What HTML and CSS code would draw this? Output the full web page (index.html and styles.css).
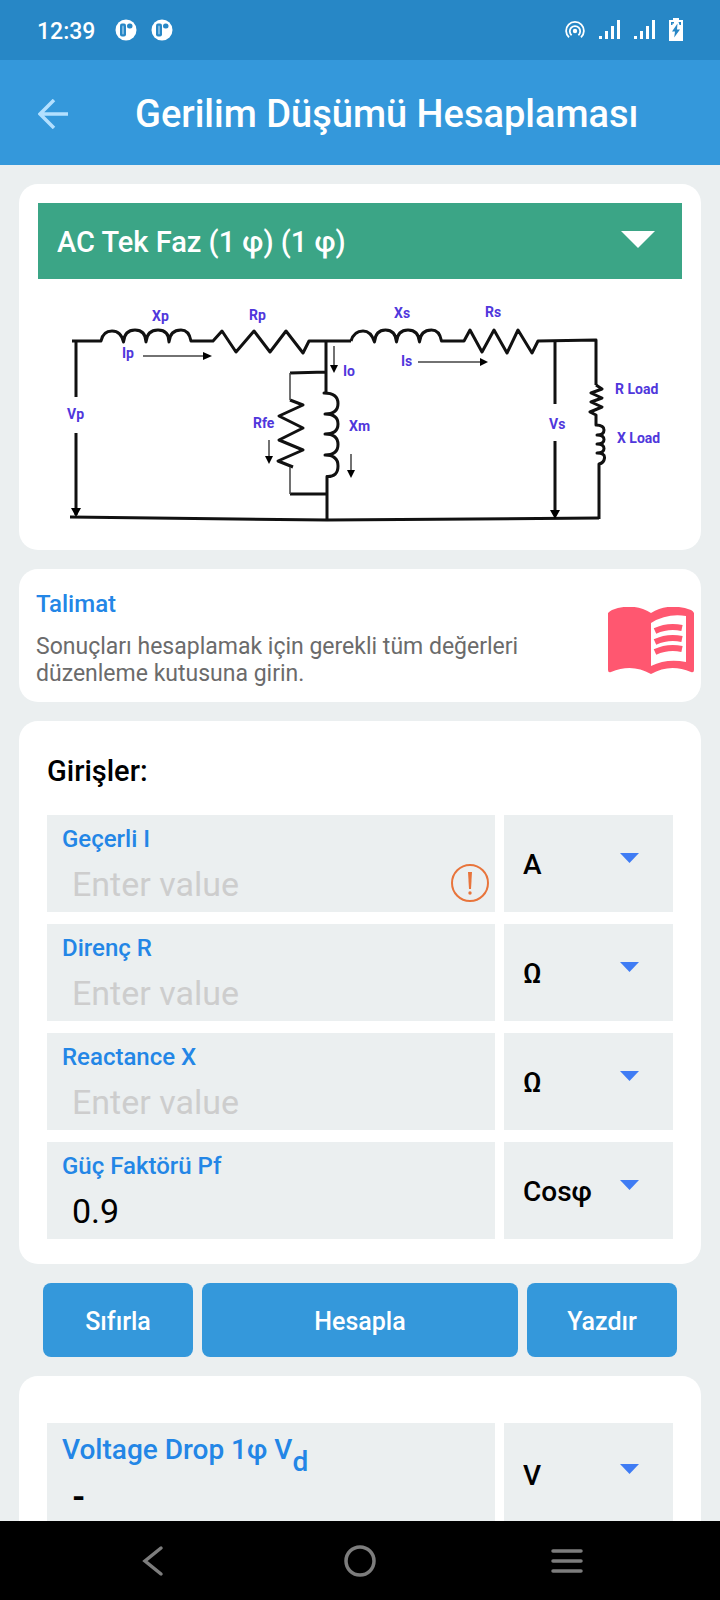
FILE: index.html
```html
<!DOCTYPE html>
<html lang="tr">
<head>
  <meta charset="UTF-8">
  <meta name="viewport" content="width=device-width, initial-scale=1.0">
  <title>Gerilim Düşümü Hesaplaması</title>
  <link rel="stylesheet" href="styles.css">
</head>
<body>
  <!-- Status bar -->
  <div class="status-bar">
    <div class="status-left">
      <span class="clock">12:39</span>
      <svg width="22" height="22" viewBox="0 0 22 22">
        <circle cx="11" cy="11" r="10.5" fill="#fff"/>
        <rect x="5" y="4.5" width="6" height="13" rx="2" fill="#2787c6"/>
        <rect x="7" y="6.5" width="2" height="9" rx="1" fill="#7db8e0"/>
        <rect x="12" y="4.5" width="5.5" height="5" rx="2.5" fill="#2787c6"/>
      </svg>
      <svg width="22" height="22" viewBox="0 0 22 22">
        <circle cx="11" cy="11" r="10.5" fill="#fff"/>
        <rect x="5" y="4.5" width="6" height="13" rx="2" fill="#2787c6"/>
        <rect x="7" y="6.5" width="2" height="9" rx="1" fill="#7db8e0"/>
        <rect x="12" y="4.5" width="5.5" height="5" rx="2.5" fill="#2787c6"/>
      </svg>
    </div>
    <div class="status-right">
      <svg width="20" height="24" viewBox="0 0 20 24" fill="none" stroke="#fff" stroke-width="1.8">
        <circle cx="10" cy="13" r="2.2" fill="#fff" stroke="none"/>
        <path d="M6.6 17.2A5.2 5.2 0 1 1 13.4 17.2"/>
        <path d="M4 19.4A8.9 8.9 0 1 1 16 19.4"/>
      </svg>
      <svg width="21" height="24" viewBox="0 0 21 24" fill="#fff">
        <path d="M0 18h3v3H0zM6 13h3v8H6zM12 8h3v13h-3zM18 2h3v19h-3z"/>
      </svg>
      <svg width="21" height="24" viewBox="0 0 21 24" fill="#fff">
        <path d="M0 18h3v3H0zM6 13h3v8H6zM12 8h3v13h-3zM18 2h3v19h-3z"/>
      </svg>
      <svg width="14" height="24" viewBox="0 0 14 24">
        <path d="M4 0h6v2h4v21H0V2h4z" fill="#fff"/>
        <path d="M2 4h3v1.500H3.500V7H2zM9.500 4H12v3h-1.500z" fill="#2787c6"/>
        <path d="M8.500 5.500 3 13.500h3l-.8 6L11 11.500H8z" fill="#2787c6"/>
      </svg>
    </div>
  </div>

  <!-- App bar -->
  <header class="app-bar">
    <button class="back" type="button" aria-label="Geri">
      <svg width="30" height="30" viewBox="0 0 30 30" fill="none" stroke="#b3e0ff" stroke-width="3.5">
        <path d="M30 15H2M16 1 2 15l14 14"/>
      </svg>
    </button>
    <h1>Gerilim Düşümü Hesaplaması</h1>
  </header>

  <main class="content">
    <!-- Circuit type -->
    <section class="card circuit-card">
      <div class="type-select">
        <select aria-label="Devre tipi">
          <option>AC Tek Faz (1 φ) (1 φ)</option>
          <option>AC Üç Faz (3 φ)</option>
          <option>DC</option>
        </select>
      </div>
      <svg class="circuit" viewBox="38 279 644 252">
        <g class="wire">
          <!-- primary side -->
          <path d="M72 341H101q2-10 11-10t11.500 11q1-12 11.500-12t11 12q1-12 12-12t11 12q1-12 12-12 8 0 10 11H213L222 331 236 352 254 331 270 352 286 331 303 353 309 341H351"/>
          <path d="M76 341V397M76 433V515"/>
          <!-- secondary side -->
          <path d="M351 341q3-10 12-10 8 0 11.500 11q1-12 11-12t11 12q1-12 11.500-12t11.500 12q1-12 12-12 8 0 10 11H464L470 330 482 352 494 330 507 353 518 330 532 353 538 341 596 340V385"/>
          <path d="M555 341V404M555 441V515"/>
          <!-- load -->
          <path d="M596 385 602 389 591 393 602 398 591 402 602 407 590 412 596 415V425q8 0 8 5t-7 5q7 0 7 4.500t-7 4.500q7 0 7 4.500t-7 4.500q8 0 7.500 5t-5.500 6V519"/>
          <!-- magnetising branch -->
          <path d="M326 341V393H324q14 0 14 10.500t-13 10.500q13 0 13 10t-13 10q13 0 13 10.500t-13 10.500q13 0 13 11t-11 10.500V520M290 373 326 372M290 494H326"/>
          <path d="M290 400 303 405 279 416 303 428 279 440 303 450 278 461 293 467"/>
          <path d="M70 517 327 520 599 518"/>
        </g>
        <g class="thin">
          <path d="M290 373V400M290 467V494M143 356H205M418 362H482M269 440V457M351 454V471M334 346V366"/>
        </g>
        <path d="M212 356l-9-4v8zM488 362l-8-4v8zM269 464l-4-8h8zM351 478l-4-8h8zM334 373l-4-8h8zM76 517l-5-9h10zM555 519l-5-9h10z"/>
        <g class="circuit-label">
          <text x="152" y="321">Xp</text>
          <text x="249" y="320">Rp</text>
          <text x="122" y="358">Ip</text>
          <text x="394" y="318">Xs</text>
          <text x="485" y="317">Rs</text>
          <text x="401" y="366">Is</text>
          <text x="343" y="376">Io</text>
          <text x="67" y="419">Vp</text>
          <text x="253" y="428">Rfe</text>
          <text x="349" y="431">Xm</text>
          <text x="549" y="429">Vs</text>
          <text x="615" y="394">R Load</text>
          <text x="617" y="443">X Load</text>
        </g>
      </svg>
    </section>

    <!-- Instructions -->
    <section class="card info-card">
      <div class="info-text">
        <h2>Talimat</h2>
        <p>Sonuçları hesaplamak için gerekli tüm değerleri düzenleme kutusuna girin.</p>
      </div>
      <svg class="book" width="87" height="68" viewBox="0 0 87 68">
        <path d="M0 6Q2 4 4 3 25-5 43 6 61-5 83 3 85 4 86 6V63Q86 66 83 65 62 56 43 67 24 56 3 65 0 66 0 63z" fill="#ff5770"/>
        <path d="M43 16Q59 6 78 9V55Q59 51 43 59z" fill="#fff"/>
        <g fill="none" stroke="#ff5770" stroke-width="6">
          <path d="M47 24Q60 18 74 21M47 35Q60 29 74 32M47 45Q60 39 74 42"/>
        </g>
      </svg>
    </section>

    <!-- Inputs -->
    <section class="card form-card">
      <h2>Girişler:</h2>
      <div class="row">
        <div class="field">
          <label for="current">Geçerli I</label>
          <input id="current" type="text" placeholder="Enter value">
          <svg class="warning" width="38" height="38" viewBox="0 0 38 38">
            <circle cx="19" cy="19" r="18" fill="none" stroke="#e8743b" stroke-width="2"/>
            <path d="M17 8h4l-1 17h-2z" fill="#e8743b"/>
            <circle cx="19" cy="29" r="1.700" fill="#e8743b"/>
          </svg>
        </div>
        <div class="unit">
          <select aria-label="Geçerli I birimi"><option>A</option><option>mA</option></select>
        </div>
      </div>
      <div class="row">
        <div class="field">
          <label for="resistance">Direnç R</label>
          <input id="resistance" type="text" placeholder="Enter value">
        </div>
        <div class="unit">
          <select aria-label="Direnç R birimi"><option>Ω</option><option>kΩ</option></select>
        </div>
      </div>
      <div class="row">
        <div class="field">
          <label for="reactance">Reactance X</label>
          <input id="reactance" type="text" placeholder="Enter value">
        </div>
        <div class="unit">
          <select aria-label="Reactance X birimi"><option>Ω</option><option>kΩ</option></select>
        </div>
      </div>
      <div class="row">
        <div class="field">
          <label for="pf">Güç Faktörü Pf</label>
          <input id="pf" type="text" value="0.9">
        </div>
        <div class="unit">
          <select aria-label="Güç Faktörü birimi"><option>Cosφ</option><option>Sinφ</option></select>
        </div>
      </div>
    </section>

    <!-- Actions -->
    <div class="actions">
      <button type="button">Sıfırla</button>
      <button type="button">Hesapla</button>
      <button type="button">Yazdır</button>
    </div>

    <!-- Results -->
    <section class="card result-card">
      <div class="row">
        <div class="field result">
          <div class="result-name">Voltage Drop 1φ V<sub>d</sub></div>
          <output>-</output>
        </div>
        <div class="unit">
          <select aria-label="Voltage Drop birimi"><option>V</option><option>mV</option></select>
        </div>
      </div>
    </section>
  </main>

  <!-- System navigation -->
  <nav class="nav-bar">
    <button type="button" aria-label="Geri">
      <svg width="32" height="32" viewBox="0 0 32 32"><path d="M24 3 8 16 24 29"/></svg>
    </button>
    <button type="button" aria-label="Ana ekran">
      <svg width="32" height="32" viewBox="0 0 32 32"><circle cx="16" cy="16" r="14"/></svg>
    </button>
    <button type="button" aria-label="Son uygulamalar">
      <svg width="32" height="32" viewBox="0 0 32 32"><path d="M2 6H30M2 16H30M2 26H30"/></svg>
    </button>
  </nav>
</body>
</html>
```
FILE: styles.css
```css
* {
  box-sizing: border-box;
}
body {
  margin: 0;
  height: 100vh;
  display: flex;
  flex-direction: column;
  font-family: Roboto, sans-serif;
  background-color: #ebeff0;
  color: #000;
}
svg {
  display: block;
  flex-shrink: 0;
}
h1, h2, p {
  margin: 0;
  font-weight: 500;
}
button, input, select {
  font-family: inherit;
  border: none;
  border-radius: 0;
}

/* Status bar */
.status-bar {
  display: flex;
  justify-content: space-between;
  align-items: center;
  height: 60px;
  padding: 0 37px;
  background-color: #2787c6;
  color: #fff;
  flex-shrink: 0;
}
.status-left,
.status-right {
  display: flex;
  align-items: center;
  gap: 14px;
}
.clock {
  padding-top: 2px;
  font-size: 23px;
  font-weight: 500;
  margin-right: 6px;
}

/* App bar */
.app-bar {
  display: flex;
  align-items: center;
  height: 105px;
  padding: 2px 38px 0;
  background-color: #3498db;
  color: #fff;
  flex-shrink: 0;
}
.back {
  padding: 0;
  background: none;
}
.app-bar h1 {
  margin-left: 67px;
  font-size: 38px;
}

/* Content */
.content {
  flex: 1;
  min-height: 0;
  overflow: hidden;
  display: flex;
  flex-direction: column;
  gap: 19px;
  padding: 19px 19px 0;
}
.card {
  flex-shrink: 0;
  background-color: #fff;
  border-radius: 19px;
}

/* Circuit type */
.circuit-card {
  padding: 19px;
}
.type-select,
.unit {
  position: relative;
}
.type-select select {
  display: block;
  width: 100%;
  height: 76px;
  padding: 2px 19px 0;
  background-color: #3ba586;
  color: #fff;
  font-size: 29px;
  font-weight: 500;
  appearance: none;
}
.type-select::after,
.unit::after {
  content: '';
  position: absolute;
  pointer-events: none;
  clip-path: polygon(0 0, 100% 0, 50% 100%);
}
.type-select::after {
  top: 28px;
  right: 27px;
  width: 34px;
  height: 17px;
  background-color: #fff;
}
.circuit {
  width: 100%;
}
.wire {
  fill: none;
  stroke: #111;
  stroke-width: 3;
  stroke-linejoin: round;
}
.thin {
  fill: none;
  stroke: #444;
  stroke-width: 1.5;
}
.circuit-label {
  font-size: 14px;
  font-weight: 700;
  fill: #5037dc;
}

/* Instructions */
.info-card {
  display: flex;
  justify-content: space-between;
  align-items: center;
  gap: 19px;
  padding: 19px 6px 15px 17px;
}
.info-text {
  max-width: 520px;
}
.info-text h2 {
  font-size: 24px;
  line-height: 32px;
  color: #2386e6;
}
.info-text p {
  margin-top: 13px;
  font-size: 23px;
  line-height: 27px;
  font-weight: 400;
  color: #6b6b6b;
}
.book {
  margin-top: 6px;
}

/* Form rows */
.form-card {
  display: flex;
  flex-direction: column;
  gap: 12px;
  padding: 30px 28px 25px;
}
.form-card h2 {
  margin-bottom: 12px;
  font-size: 29px;
  line-height: 40px;
}
.row {
  display: flex;
  gap: 9px;
}
.field {
  position: relative;
  flex: 1;
  height: 97px;
  padding: 9px 15px 0;
  background-color: #ebeff0;
}
.field label {
  display: block;
  font-size: 24px;
  line-height: 30px;
  font-weight: 500;
  color: #2386e6;
}
.field input {
  display: block;
  width: 85%;
  height: 50px;
  margin-top: 5px;
  padding: 0 10px;
  background: none;
  font-size: 34px;
  color: #000;
}
.field input::placeholder {
  color: #cdcdcd;
  opacity: 1;
}
.warning {
  position: absolute;
  right: 6px;
  bottom: 10px;
}
.unit select {
  display: block;
  width: 169px;
  height: 97px;
  padding: 2px 19px 0;
  background-color: #ebeff0;
  color: #000;
  font-size: 28px;
  font-weight: 500;
  appearance: none;
}
.unit::after {
  top: 38px;
  right: 34px;
  width: 19px;
  height: 10px;
  background-color: #3f7cf4;
}

/* Actions */
.actions {
  display: flex;
  flex-shrink: 0;
  gap: 9px;
  padding: 0 24px;
}
.actions button {
  width: 150px;
  height: 74px;
  padding: 2px 0 0;
  border-radius: 8px;
  background-color: #3498db;
  color: #fff;
  font-size: 25px;
  font-weight: 500;
}
.actions button:nth-child(2) {
  flex: 1;
}

/* Results */
.result-card {
  padding: 47px 28px 25px;
}
.result-card .field,
.result-card .unit select {
  height: 103px;
}
.result-card .unit::after {
  top: 41px;
}
.result-name {
  font-size: 28px;
  line-height: 36px;
  font-weight: 500;
  color: #2386e6;
}
.result-name sub {
  font-size: 28px;
  line-height: 1;
  vertical-align: -12px;
}
.result output {
  display: block;
  padding: 0 10px;
  font-size: 34px;
  line-height: 40px;
  font-weight: 700;
}

/* System navigation */
.nav-bar {
  display: grid;
  grid-template-columns: repeat(3, 1fr);
  flex-shrink: 0;
  height: 79px;
  padding: 0 50px;
  background-color: #000;
}
.nav-bar button {
  display: flex;
  justify-content: center;
  align-items: center;
  background: none;
}
.nav-bar svg {
  fill: none;
  stroke: #7d7d7d;
  stroke-width: 3.5;
  stroke-linecap: round;
}
```
